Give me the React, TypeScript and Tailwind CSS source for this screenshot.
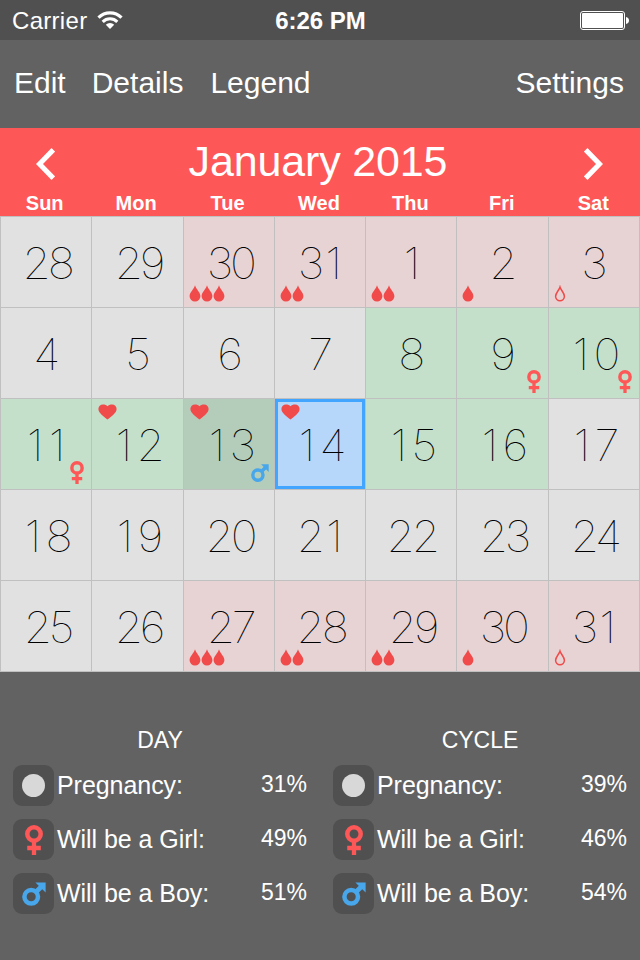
import { clsx } from "clsx";

type Tone = "none" | "period" | "fertile" | "ovulation" | "today";

interface Day {
  n: number;
  tone?: Tone;
  drops?: number;
  outline?: boolean;
  heart?: boolean;
  sex?: "girl" | "boy";
}

const weekdays = ["Sun", "Mon", "Tue", "Wed", "Thu", "Fri", "Sat"];

const days: Day[] = [
  { n: 28 },
  { n: 29 },
  { n: 30, tone: "period", drops: 3 },
  { n: 31, tone: "period", drops: 2 },
  { n: 1, tone: "period", drops: 2 },
  { n: 2, tone: "period", drops: 1 },
  { n: 3, tone: "period", drops: 1, outline: true },
  { n: 4 },
  { n: 5 },
  { n: 6 },
  { n: 7 },
  { n: 8, tone: "fertile" },
  { n: 9, tone: "fertile", sex: "girl" },
  { n: 10, tone: "fertile", sex: "girl" },
  { n: 11, tone: "fertile", sex: "girl" },
  { n: 12, tone: "fertile", heart: true },
  { n: 13, tone: "ovulation", heart: true, sex: "boy" },
  { n: 14, tone: "today", heart: true },
  { n: 15, tone: "fertile" },
  { n: 16, tone: "fertile" },
  { n: 17 },
  { n: 18 },
  { n: 19 },
  { n: 20 },
  { n: 21 },
  { n: 22 },
  { n: 23 },
  { n: 24 },
  { n: 25 },
  { n: 26 },
  { n: 27, tone: "period", drops: 3 },
  { n: 28, tone: "period", drops: 2 },
  { n: 29, tone: "period", drops: 2 },
  { n: 30, tone: "period", drops: 1 },
  { n: 31, tone: "period", drops: 1, outline: true },
];

const tones: Record<Tone, string> = {
  none: "bg-[#e1e1e1]",
  period: "bg-[#e7d3d3]",
  fertile: "bg-[#c4dfca]",
  ovulation: "bg-[#b4cdbb]",
  today: "bg-[#b6d6fa]",
};

const spacing = (n: number) => {
  if (n < 10) return "left-[1px]";
  if (n === 11) return "left-[3px] tracking-[5px]";
  if (n < 20) return "left-[5px] tracking-[4px]";
  if (n % 10 === 1) return "left-[0px] tracking-[1px]";
  return "left-[1px] tracking-[-3px]";
};

const Drop = ({ outline }: { outline?: boolean }) => (
  <svg width="12" height="17" viewBox="0 0 12 17">
    {outline ? (
      <path
        d="M6 2.2C5.2 5 1.6 8 1.6 11.3a4.4 4.4 0 0 0 8.8 0C10.4 8 6.8 5 6 2.2Z"
        fill="none"
        stroke="#f04a4a"
        strokeWidth="1.5"
      />
    ) : (
      <path d="M6 .3C5.2 4 .6 7.3.6 11.2a5.4 5.4 0 0 0 10.8 0C11.4 7.3 6.8 4 6 .3Z" fill="#f04a4a" />
    )}
  </svg>
);

const Heart = () => (
  <svg width="19" height="16" viewBox="0 0 19 16">
    <path
      d="M9.5 15.500C6 12.600.4 9 .4 5 .4 2.300 2.400.4 5 .4c1.900 0 3.500.6 4.500 1.900C10.500 1 12.100.4 14 .4c2.600 0 4.600 1.900 4.600 4.600 0 4-5.600 7.600-9.100 10.500Z"
      fill="#f04a4a"
    />
  </svg>
);

const Female = ({ className }: { className?: string }) => (
  <svg viewBox="0 0 18 30" className={className} fill="none" stroke="#fe5757">
    <circle cx="9" cy="9" r="6.7" strokeWidth="4.5" />
    <path d="M9 16v14M2.2 23h13.6" strokeWidth="4.3" />
  </svg>
);

const Male = ({ className }: { className?: string }) => (
  <svg viewBox="0 0 24 24" className={className} fill="none" stroke="#48a6ea">
    <circle cx="9.2" cy="14.8" r="6.8" strokeWidth="4.5" />
    <path d="M14 10 20 4" strokeWidth="4.8" />
    <path d="M13.4.4h10.2v10.2Z" fill="#48a6ea" stroke="none" />
  </svg>
);

const DayCell = ({ day }: { day: Day }) => (
  <div
    className={clsx(
      "relative flex items-center justify-center border-r border-b border-[#c0c0c0]",
      tones[day.tone ?? "none"],
    )}
  >
    {day.tone === "today" && <div className="absolute inset-0 border-3 border-[#42a5ff]" />}
    <span
      className={clsx(
        "relative top-[1px] scale-x-106 font-[Inter] text-[43px] leading-none font-thin text-black antialiased",
        spacing(day.n),
      )}
    >
      {day.n}
    </span>
    {day.drops && (
      <div className="absolute bottom-[5px] left-[5px] flex">
        {Array.from({ length: day.drops }, (_, i) => (
          <Drop key={i} outline={day.outline} />
        ))}
      </div>
    )}
    {day.heart && (
      <div className="absolute top-[5px] left-[6px]">
        <Heart />
      </div>
    )}
    {day.sex === "girl" && <Female className="absolute right-[7px] bottom-[5px] h-[23px] w-[14px]" />}
    {day.sex === "boy" && <Male className="absolute right-[5px] bottom-[7px] size-[18px]" />}
  </div>
);

const Chances = ({ title, values }: { title: string; values: string[] }) => (
  <section className="w-1/2 pt-[54px]">
    <h2 className="text-center text-[23px] leading-[28px]">{title}</h2>
    <ul className="mt-[11px] flex flex-col gap-[13px] px-[13px]">
      {["Pregnancy:", "Will be a Girl:", "Will be a Boy:"].map((label, i) => (
        <li key={label} className="flex h-[41px] items-center">
          <div className="flex size-[41px] items-center justify-center rounded-[9px] bg-[#505050]">
            {i === 0 && <div className="size-[23px] rounded-full bg-[#d8d8d8]" />}
            {i === 1 && <Female className="h-[30px] w-[18px]" />}
            {i === 2 && <Male className="size-[24px]" />}
          </div>
          <span className="ml-[3px] pb-[2px] text-[25px] leading-[28px] tracking-[-0.05px]">{label}</span>
          <span className="ml-auto pb-[4px] text-[23px] leading-[28px]">{values[i]}</span>
        </li>
      ))}
    </ul>
  </section>
);

export default function App() {
  return (
    <div className="flex h-[960px] w-[640px] flex-col overflow-hidden bg-[#626262] font-['Liberation_Sans',sans-serif] text-white">
      {/* Status bar */}
      <div className="grid h-10 grid-cols-3 items-center bg-[#505050] pr-[11px] pl-[12px]">
        <div className="flex items-center gap-[10px]">
          <span className="pt-[2px] text-[24px] leading-none tracking-[0.3px]">Carrier</span>
          <svg width="26" height="20" viewBox="0 0 26 20" fill="none" stroke="white">
            <path d="M1.5 7.6a16.3 16.3 0 0 1 23 0" strokeWidth="3.2" />
            <path d="M5.7 11.9a10.3 10.3 0 0 1 14.6 0" strokeWidth="3" />
            <path d="M13 19 8.8 14.8a6 6 0 0 1 8.400 0Z" fill="white" stroke="none" />
          </svg>
        </div>
        <span className="pt-[2px] text-center text-[24px] leading-none font-bold">6:26 PM</span>
        <svg width="49" height="19" viewBox="0 0 49 19" className="justify-self-end">
          <rect x=".5" y=".5" width="44" height="18" rx="2.5" fill="none" stroke="white" />
          <rect x="2" y="2" width="41" height="15" rx="1" fill="white" />
          <path d="M46 6c2 .5 3 1.8 3 3.5s-1 3-3 3.5Z" fill="white" />
        </svg>
      </div>

      {/* Toolbar */}
      <nav className="flex h-[88px] items-center pr-[16px] pb-[2px] pl-[14px] text-[30px] leading-none">
        <button>Edit</button>
        <button className="ml-[26px]">Details</button>
        <button className="ml-[27px]">Legend</button>
        <button className="ml-auto">Settings</button>
      </nav>

      {/* Month header */}
      <header className="h-[88px] bg-[#fe5757]">
        <div className="flex h-[64px] items-center justify-between pr-[36px] pl-[35px]">
          <svg width="20" height="32" viewBox="0 0 20 32" className="mt-[8px]" fill="none" stroke="white" strokeWidth="5">
            <path d="M18.3 1.8 4.500 16l13.8 14.2" />
          </svg>
          <h1 className="mr-[3px] pt-[2px] text-[43px] leading-none tracking-[-0.15px]">January 2015</h1>
          <svg width="20" height="32" viewBox="0 0 20 32" className="mt-[8px]" fill="none" stroke="white" strokeWidth="5">
            <path d="M1.7 1.8 15.5 16 1.7 30.2" />
          </svg>
        </div>
        <div className="mr-[1px] -ml-[1px] grid grid-cols-7 text-center text-[20px] leading-[22px] font-bold">
          {weekdays.map((d) => (
            <span key={d}>{d}</span>
          ))}
        </div>
      </header>

      {/* Calendar */}
      <div className="grid auto-rows-[91px] grid-cols-[91px_92px_91px_91px_91px_92px_91px] border-t border-l border-[#c0c0c0]">
        {days.map((day, i) => (
          <DayCell key={i} day={day} />
        ))}
      </div>

      {/* Chances */}
      <div className="flex">
        <Chances title="DAY" values={["31%", "49%", "51%"]} />
        <Chances title="CYCLE" values={["39%", "46%", "54%"]} />
      </div>
    </div>
  );
}
